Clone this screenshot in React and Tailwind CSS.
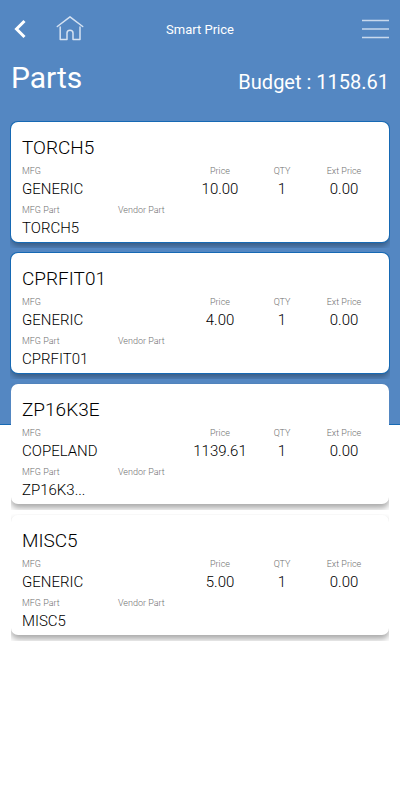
import React from 'react';

const parts = [
  { name: 'TORCH5', mfg: 'GENERIC', price: 10, qty: 1, extPrice: 0, mfgPart: 'TORCH5', vendorPart: '' },
  { name: 'CPRFIT01', mfg: 'GENERIC', price: 4, qty: 1, extPrice: 0, mfgPart: 'CPRFIT01', vendorPart: '' },
  { name: 'ZP16K3E', mfg: 'COPELAND', price: 1139.61, qty: 1, extPrice: 0, mfgPart: 'ZP16K3...', vendorPart: '' },
  { name: 'MISC5', mfg: 'GENERIC', price: 5, qty: 1, extPrice: 0, mfgPart: 'MISC5', vendorPart: '' },
];

const Field = ({ label, value, className = '' }) => (
  <div className={className}>
    <dt className="text-[9px] leading-3 text-[#707070]">{label}</dt>
    <dd className="mt-0.5 h-5 text-[15px] leading-5 text-black">{value}</dd>
  </div>
);

const PartCard = ({ part, outlined }) => (
  // The list item clips the card shadow at its own edges
  <li className={`overflow-hidden pt-px pb-1.5 ${outlined ? '-mx-px px-px' : ''}`}>
    <article
      className={`rounded-[7px] bg-white px-[11px] pt-[13px] pb-1 font-light shadow-[0_4px_6px_rgba(0,0,0,0.35)] ${
        outlined ? 'ring-1 ring-[#1669b4]' : ''
      }`}
    >
      <h2 className="text-[19px] leading-[26px] text-black">{part.name}</h2>
      <dl className="mt-1 flex pr-[3px]">
        <Field label="MFG" value={part.mfg} className="flex-1" />
        <Field label="Price" value={part.price.toFixed(2)} className="w-[62px] text-center" />
        <Field label="QTY" value={part.qty} className="w-[62px] text-center" />
        <Field label="Ext Price" value={part.extPrice.toFixed(2)} className="w-[62px] text-center" />
      </dl>
      <dl className="mt-[5px] flex">
        <Field label="MFG Part" value={part.mfgPart} className="w-24" />
        <Field label="Vendor Part" value={part.vendorPart} />
      </dl>
    </article>
  </li>
);

const App = () => {
  const budget = parts.reduce((sum, p) => sum + p.price * p.qty, 0);

  return (
    <div className="relative min-h-screen bg-white font-['Roboto',sans-serif]">
      {/* Blue backdrop behind the header and the top of the list */}
      <div className="absolute inset-x-0 top-0 h-[calc(53vh+1px)] border-b border-[#1669b4] bg-[#5487c2]" />

      <div className="relative">
        <header className="grid h-[58px] grid-cols-[1fr_auto_1fr] items-center px-[11px] text-white">
          <div className="flex items-center gap-[26px]">
            <button type="button" aria-label="Back">
              <svg width="18" height="28" viewBox="0 0 18 28" fill="none" stroke="currentColor" strokeWidth="3">
                <path d="M13.5 6 L5.5 14 L13.5 22" />
              </svg>
            </button>
            <button type="button" aria-label="Home">
              <svg width="30" height="28" viewBox="0 0 30 28" fill="none" stroke="#d5e2f2" strokeWidth="1.5" strokeLinejoin="round" strokeLinecap="round">
                <path d="M2.3 11.5 L15 1.8 L27.7 11.5" />
                <path d="M5.2 12 V24.5 H12 V18 Q12 15.2 15 15.2 Q18 15.2 18 18 V24.5 H25 V12" />
              </svg>
            </button>
          </div>
          <span className="pt-0.5 text-[13px] leading-5">Smart Price</span>
          <button type="button" aria-label="Menu" className="justify-self-end">
            <svg width="27" height="20" viewBox="0 0 27 20" fill="none">
              <path d="M0 1.5 H27 M0 18.5 H27" stroke="#c9d9ed" strokeWidth="1.4" />
              <path d="M0 10 H27" stroke="#a9c3e2" strokeWidth="2" />
            </svg>
          </button>
        </header>

        <div className="flex items-center justify-between px-[11px] pb-[23px] text-white">
          <h1 className="text-3xl leading-10">Parts</h1>
          <p className="pt-2 text-xl leading-8">Budget : {budget.toFixed(2)}</p>
        </div>

        <ul className="flex flex-col gap-1 px-[11px]">
          {parts.map((part, index) => (
            <PartCard key={part.name} part={part} outlined={index < 2} />
          ))}
        </ul>
      </div>
    </div>
  );
};

export default App;
